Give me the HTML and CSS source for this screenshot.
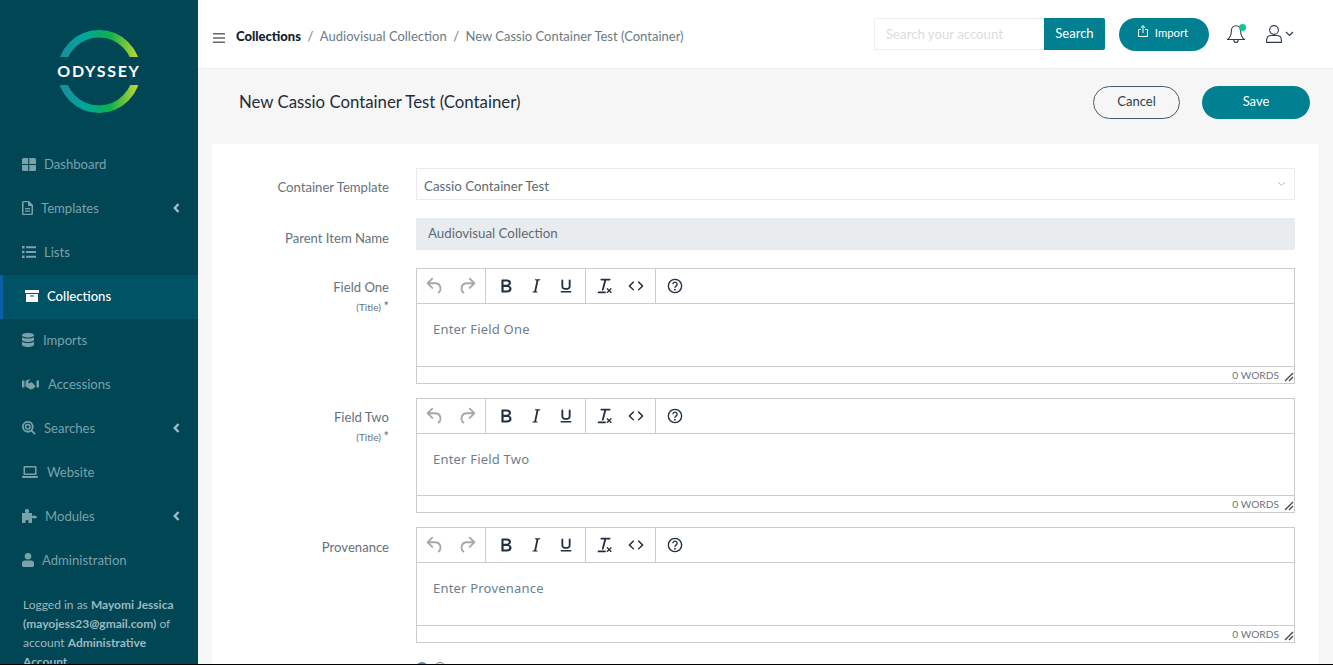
FILE: index.html
```html
<!DOCTYPE html>
<html lang="en">
<head>
    <meta charset="UTF-8">
    <title>New Cassio Container Test (Container)</title>
    <link rel="stylesheet" href="styles.css">
</head>
<body>

    <svg class="defs" width="0" height="0">
        <symbol id="i-undo" viewBox="0 0 24 24"><path d="M6.4 8H12c3.7 0 6.2 2 6.8 5.1.6 2.7-.4 5.6-2.3 6.8a1 1 0 0 1-1-1.8c1.1-.6 1.8-2.7 1.4-4.6-.5-2.1-2.1-3.5-4.9-3.5H6.4l3.3 3.3a1 1 0 1 1-1.4 1.4l-5-5a1 1 0 0 1 0-1.4l5-5a1 1 0 0 1 1.4 1.4L6.4 8z"/></symbol>
        <symbol id="i-redo" viewBox="0 0 24 24"><path d="M17.6 8H12c-3.7 0-6.2 2-6.8 5.1-.6 2.7.4 5.6 2.300 6.8a1 1 0 0 0 1-1.800c-1.100-.6-1.800-2.700-1.400-4.600.5-2.100 2.100-3.500 4.900-3.500h5.600l-3.300 3.300a1 1 0 1 0 1.400 1.400l5-5a1 1 0 0 0 0-1.400l-5-5a1 1 0 0 0-1.400 1.400L17.600 8z"/></symbol>
        <symbol id="i-bold" viewBox="0 0 24 24"><path d="M7.8 19c-.3 0-.5 0-.6-.2l-.2-.5V5.7c0-.2 0-.4.2-.5l.6-.2h5c1.5 0 2.7.3 3.5 1 .7.6 1.1 1.4 1.1 2.5a3 3 0 0 1-.6 1.9c-.4.6-1 1-1.6 1.2.4.1.9.3 1.3.6s.8.7 1 1.2c.4.4.5 1 .5 1.6 0 1.3-.4 2.3-1.3 3-.8.7-2.1 1-3.8 1H7.8zm5-8.3c.6 0 1.2-.1 1.6-.5.4-.3.6-.7.6-1.3 0-1.1-.8-1.7-2.3-1.7H9.3v3.5h3.4zm.5 6c.7 0 1.3-.1 1.7-.4.4-.4.6-.9.6-1.5s-.2-1-.7-1.4c-.4-.3-1-.4-2-.4H9.4v3.8h4z"/></symbol>
        <symbol id="i-italic" viewBox="0 0 24 24"><path d="M16.7 4.7l-.1.9h-.3c-.6 0-1 0-1.4.3-.3.3-.4.6-.5 1.1l-2.1 9.8v.6c0 .5.4.8 1.4.8h.2l-.2.8H8l.2-.8h.2c1.1 0 1.8-.5 2-1.5l2-9.8.1-.5c0-.6-.4-.8-1.4-.8h-.3l.2-.9h5.800z"/></symbol>
        <symbol id="i-underline" viewBox="0 0 24 24"><path d="M16 5c.6 0 1 .4 1 1v6.500c0 2.500-2.200 3.700-5 3.700s-5-1.200-5-3.700V6c0-.6.4-1 1-1s1 .4 1 1v6.500c0 1.200 1.300 1.800 3 1.800s3-.6 3-1.800V6c0-.6.4-1 1-1zM7 17.500h10c.6 0 1 .3 1 .8s-.4.8-1 .8H7c-.6 0-1-.3-1-.8s.4-.8 1-.8z"/></symbol>
        <symbol id="i-clear" viewBox="0 0 24 24"><path d="M13.2 6a1 1 0 0 1 0 .2l-2.6 10a1 1 0 0 1-1 .8h-.2a.8.8 0 0 1-.8-1l2.6-10H8a1 1 0 1 1 0-2h9a1 1 0 0 1 0 2h-3.8zM5 18h7a1 1 0 0 1 0 2H5a1 1 0 0 1 0-2zm13 1.5L16.5 18 15 19.5a.7.7 0 0 1-1-1l1.5-1.5-1.5-1.5a.7.7 0 0 1 1-1l1.5 1.5 1.5-1.5a.7.7 0 0 1 1 1L17.5 17l1.5 1.5a.7.7 0 0 1-1 1z"/></symbol>
        <symbol id="i-code" viewBox="0 0 24 24"><path d="M9.8 15.7c.3.3.3.8 0 1-.3.4-.9.4-1.2 0l-4.4-4.1a.8.8 0 0 1 0-1.2l4.4-4.2c.3-.3.9-.3 1.2 0 .3.3.3.8 0 1.1L6 12l3.8 3.7zM14.2 15.7c-.3.3-.3.8 0 1 .4.4.9.4 1.2 0l4.4-4.1c.3-.3.3-.9 0-1.2l-4.4-4.2a.8.8 0 0 0-1.2 0c-.3.3-.3.8 0 1.1L18 12l-3.8 3.7z"/></symbol>
        <symbol id="i-help" viewBox="0 0 24 24"><path d="M12 4a8 8 0 1 1 0 16 8 8 0 0 1 0-16zm0 1.500a6.500 6.500 0 1 0 0 13 6.500 6.500 0 0 0 0-13zm-.1 9.500a1 1 0 1 1 0 2 1 1 0 0 1 0-2zm.1-8c1.700 0 3 1.300 3 3 0 1.300-.8 2.200-1.600 2.700-.4.2-.7.6-.7 1.100v.2h-1.500v-.3c0-1 .6-1.800 1.400-2.300.5-.3.9-.7.9-1.400 0-.8-.7-1.500-1.500-1.500s-1.500.7-1.500 1.500H9c0-1.700 1.300-3 3-3z"/></symbol>
        <symbol id="i-grip" viewBox="0 0 10 10"><path d="M9 1 1 9M9 5 5 9" fill="none" stroke="currentColor" stroke-width="1.300"/></symbol>
        <symbol id="i-caret" viewBox="0 0 7 10"><path d="M5.500 1 1.800 5l3.700 4" fill="none" stroke="currentColor" stroke-width="2.400"/></symbol>
    </svg>

    <div class="app">

        <aside class="sidebar">
            <div class="logo">
                <svg width="100" height="90" viewBox="0 0 100 90">
                    <defs>
                        <linearGradient id="ring" x1="0" y1="0" x2="1" y2="0">
                            <stop offset="0" stop-color="#1c8c9c"/>
                            <stop offset="0.3" stop-color="#00a79d"/>
                            <stop offset="0.65" stop-color="#0db14b"/>
                            <stop offset="1" stop-color="#bcd631"/>
                        </linearGradient>
                        <clipPath id="ring-cut">
                            <rect x="0" y="0" width="100" height="28"/>
                            <rect x="0" y="56" width="100" height="34"/>
                        </clipPath>
                    </defs>
                    <circle cx="50" cy="42.500" r="37.700" fill="none" stroke="url(#ring)" stroke-width="7.600" clip-path="url(#ring-cut)"/>
                </svg>
                <span class="logo-text">ODYSSEY</span>
            </div>

            <nav class="nav">
                <a class="nav-item">
                    <svg class="nav-icon" width="14" height="13" viewBox="0 0 14 13"><path d="M0 1.500A1.500 1.500 0 0 1 1.500 0h4.700v6H0zM7.300 0h5.200A1.500 1.500 0 0 1 14 1.500V6H7.300zM0 7.100h6.200V13H1.500A1.500 1.500 0 0 1 0 11.500zM7.300 7.100H14v4.400a1.500 1.500 0 0 1-1.500 1.500H7.300z"/></svg>
                    <span class="nav-label nav-label-8">Dashboard</span>
                </a>
                <a class="nav-item">
                    <svg class="nav-icon" width="11" height="14" viewBox="0 0 11 14"><path fill-rule="evenodd" d="M1.500 0H7l4 4v8.500a1.500 1.500 0 0 1-1.500 1.500h-8A1.500 1.500 0 0 1 0 12.500v-11A1.500 1.500 0 0 1 1.500 0zm0 1.300v11.400h8V5H6V1.300zM3 7h5v1.200H3zm0 2.500h5v1.200H3z"/></svg>
                    <span class="nav-label nav-label-8">Templates</span>
                    <svg class="nav-caret" width="7" height="10"><use href="#i-caret"/></svg>
                </a>
                <a class="nav-item">
                    <svg class="nav-icon" width="14" height="12" viewBox="0 0 14 12"><path d="M0 0h2.500v2.500H0zM4 .3h10v2H4zM0 4.700h2.500v2.500H0zM4 5h10v2H4zM0 9.400h2.500v2.500H0zM4 9.700h10v2H4z"/></svg>
                    <span class="nav-label nav-label-8">Lists</span>
                </a>
                <a class="nav-item nav-item-active">
                    <svg class="nav-icon" width="14" height="12" viewBox="0 0 14 12"><path fill-rule="evenodd" d="M0 0h14v3H0zM1 4h12v8H1zm4 1.500v1h4v-1z"/></svg>
                    <span class="nav-label nav-label-8">Collections</span>
                </a>
                <a class="nav-item">
                    <svg class="nav-icon" width="12" height="14" viewBox="0 0 12 14"><path d="M6 0c3.300 0 6 .9 6 2.200S9.300 4.400 6 4.400 0 3.500 0 2.200 2.700 0 6 0zM0 4c1 1 3.500 1.500 6 1.500S11 5 12 4v2.800c0 1.200-2.700 2.200-6 2.200S0 8 0 6.800zM0 8.600c1 1 3.500 1.500 6 1.500s5-.5 6-1.500v3.200C12 13 9.300 14 6 14s-6-1-6-2.200z"/></svg>
                    <span class="nav-label nav-label-9">Imports</span>
                </a>
                <a class="nav-item">
                    <svg class="nav-icon" width="17" height="11" viewBox="0 0 17 11"><path d="M0 1.500h2.500v7H0zM14.500 1.500H17v7h-2.500zM3.500 2 6.500.5h2L6 3l1 1.500L9.500 3l4 4-1 1.500-1 1-1 .5-2 .5L4.500 8l-1-.5z"/></svg>
                    <span class="nav-label nav-label-9">Accessions</span>
                </a>
                <a class="nav-item">
                    <svg class="nav-icon" width="14" height="14" viewBox="0 0 14 14"><path fill-rule="evenodd" d="M5.800 0a5.800 5.800 0 0 1 4.700 9.200l3.200 3.200-1.300 1.300-3.200-3.200A5.800 5.800 0 1 1 5.800 0zm0 1.800a4 4 0 1 0 0 8 4 4 0 0 0 0-8zm0 1a3 3 0 1 1 0 6 3 3 0 0 1 0-6zm0 1.500a1.500 1.500 0 1 0 0 3 1.500 1.500 0 0 0 0-3z"/></svg>
                    <span class="nav-label nav-label-8">Searches</span>
                    <svg class="nav-caret" width="7" height="10"><use href="#i-caret"/></svg>
                </a>
                <a class="nav-item">
                    <svg class="nav-icon" width="16" height="12" viewBox="0 0 16 12"><path fill-rule="evenodd" d="M2.500 0h11A1 1 0 0 1 14.500 1v8h-13V1a1 1 0 0 1 1-1zM3 1.400v6.200h10V1.400zM0 10h16v.8a1.200 1.200 0 0 1-1.200 1.200H1.200A1.200 1.200 0 0 1 0 10.800z"/></svg>
                    <span class="nav-label nav-label-9">Website</span>
                </a>
                <a class="nav-item">
                    <svg class="nav-icon" width="15" height="14" viewBox="0 0 15 14"><path d="M0 4h3.500C3 3 2.800 2.500 3 1.500 3.300.500 4 0 5 0s1.800.5 2 1.500c.2 1-.2 1.500-.6 2.500H10v3c1-.5 1.500-.7 2.500-.5 1 .2 2.500 1 2.500 1.500s-1.500 1.500-2.500 1.500-1.500-.2-2.500-.7V14H6.500v-1.500C6.500 11.500 6 11 5 11s-1.500.5-1.500 1.500V14H0z"/></svg>
                    <span class="nav-label nav-label-8">Modules</span>
                    <svg class="nav-caret" width="7" height="10"><use href="#i-caret"/></svg>
                </a>
                <a class="nav-item">
                    <svg class="nav-icon" width="12" height="14" viewBox="0 0 12 14"><path d="M6 0a3.300 3.300 0 1 1 0 6.600A3.300 3.300 0 0 1 6 0zM3 7.600h6a3 3 0 0 1 3 3v2A1.400 1.400 0 0 1 10.600 14H1.400A1.400 1.400 0 0 1 0 12.600v-2a3 3 0 0 1 3-3z"/></svg>
                    <span class="nav-label nav-label-8">Administration</span>
                </a>
            </nav>

            <p class="logged-in">Logged in as <b>Mayomi Jessica (mayojess23@gmail.com)</b> of account <b>Administrative Account</b></p>
        </aside>

        <div class="main">
            <header class="topbar">
                <svg class="menu-icon" width="12" height="10" viewBox="0 0 12 10"><path d="M0 0h12v1.600H0zM0 4.200h12v1.600H0zM0 8.400h12V10H0z"/></svg>
                <div class="breadcrumb">
                    <b>Collections</b>
                    <span class="crumb-sep">/</span>
                    <span>Audiovisual Collection</span>
                    <span class="crumb-sep">/</span>
                    <span>New Cassio Container Test (Container)</span>
                </div>
                <div class="topbar-right">
                    <div class="search">
                        <div class="search-input">Search your account</div>
                        <button class="search-btn">Search</button>
                    </div>
                    <button class="import-btn">
                        <svg class="import-icon" width="10" height="12" viewBox="0 0 10 12"><path d="M5 8V.8M2.800 2.800 5 .7l2.200 2.100M2.800 4.500H.5v7h9v-7H7.200" fill="none" stroke="#fff" stroke-width="1"/></svg>
                        Import
                    </button>
                    <div class="bell">
                        <svg width="18" height="18" viewBox="0 0 18 18"><path d="M9 .8C6 .8 4.300 3 4.300 6.300c0 4-1.300 6.300-3.700 8.200h16.800c-2.400-1.900-3.700-4.200-3.700-8.200C13.700 3 12 .8 9 .8zM6.800 14.500c0 2 1 3 2.200 3s2.200-1 2.200-3" fill="none" stroke="#2c3e50" stroke-width="1.100"/></svg>
                        <span class="bell-dot"></span>
                    </div>
                    <div class="user">
                        <svg width="16" height="18" viewBox="0 0 16 18"><circle cx="8" cy="5" r="4.400" fill="none" stroke="#2c3e50" stroke-width="1.100"/><path d="M.6 17.400v-2c0-3 1.900-4.900 4.700-4.900h5.400c2.800 0 4.700 1.900 4.700 4.900v2z" fill="none" stroke="#2c3e50" stroke-width="1.100"/></svg>
                        <svg width="9" height="6" viewBox="0 0 9 6"><path d="M1 1l3.500 3.500L8 1" fill="none" stroke="#2c3e50" stroke-width="1.200"/></svg>
                    </div>
                </div>
            </header>

            <div class="page-head">
                <h1 class="page-title">New Cassio Container Test (Container)</h1>
                <div class="page-actions">
                    <button class="btn btn-cancel">Cancel</button>
                    <button class="btn btn-save">Save</button>
                </div>
            </div>

            <div class="card">
                <div class="form-row form-row-field">
                    <label class="form-label">Container Template</label>
                    <div class="select">
                        <span>Cassio Container Test</span>
                        <svg width="9" height="6" viewBox="0 0 9 6"><path d="M1 1l3.500 3.500L8 1" fill="none" stroke="#b8bcc0" stroke-width="1"/></svg>
                    </div>
                </div>
                <div class="form-row form-row-field">
                    <label class="form-label form-label-low">Parent Item Name</label>
                    <div class="readonly">Audiovisual Collection</div>
                </div>

                <div class="form-row form-row-editor">
                    <label class="form-label form-label-editor">Field One<small><i>(Title)</i> <em>*</em></small></label>
                    <div class="editor">
                        <div class="toolbar">
                            <div class="tool-group tool-group-history">
                                <svg class="tool tool-off"><use href="#i-undo"/></svg>
                                <svg class="tool tool-off"><use href="#i-redo"/></svg>
                            </div>
                            <div class="tool-group tool-group-format">
                                <svg class="tool"><use href="#i-bold"/></svg>
                                <svg class="tool"><use href="#i-italic"/></svg>
                                <svg class="tool"><use href="#i-underline"/></svg>
                            </div>
                            <div class="tool-group tool-group-source">
                                <svg class="tool"><use href="#i-clear"/></svg>
                                <svg class="tool"><use href="#i-code"/></svg>
                            </div>
                            <div class="tool-group tool-group-help">
                                <svg class="tool"><use href="#i-help"/></svg>
                            </div>
                        </div>
                        <div class="editor-body">Enter Field One</div>
                        <div class="statusbar">0 WORDS<svg class="grip"><use href="#i-grip"/></svg></div>
                    </div>
                </div>

                <div class="form-row form-row-editor">
                    <label class="form-label form-label-editor">Field Two<small><i>(Title)</i> <em>*</em></small></label>
                    <div class="editor">
                        <div class="toolbar">
                            <div class="tool-group tool-group-history">
                                <svg class="tool tool-off"><use href="#i-undo"/></svg>
                                <svg class="tool tool-off"><use href="#i-redo"/></svg>
                            </div>
                            <div class="tool-group tool-group-format">
                                <svg class="tool"><use href="#i-bold"/></svg>
                                <svg class="tool"><use href="#i-italic"/></svg>
                                <svg class="tool"><use href="#i-underline"/></svg>
                            </div>
                            <div class="tool-group tool-group-source">
                                <svg class="tool"><use href="#i-clear"/></svg>
                                <svg class="tool"><use href="#i-code"/></svg>
                            </div>
                            <div class="tool-group tool-group-help">
                                <svg class="tool"><use href="#i-help"/></svg>
                            </div>
                        </div>
                        <div class="editor-body">Enter Field Two</div>
                        <div class="statusbar">0 WORDS<svg class="grip"><use href="#i-grip"/></svg></div>
                    </div>
                </div>

                <div class="form-row form-row-editor">
                    <label class="form-label form-label-editor form-label-single">Provenance</label>
                    <div class="editor">
                        <div class="toolbar">
                            <div class="tool-group tool-group-history">
                                <svg class="tool tool-off"><use href="#i-undo"/></svg>
                                <svg class="tool tool-off"><use href="#i-redo"/></svg>
                            </div>
                            <div class="tool-group tool-group-format">
                                <svg class="tool"><use href="#i-bold"/></svg>
                                <svg class="tool"><use href="#i-italic"/></svg>
                                <svg class="tool"><use href="#i-underline"/></svg>
                            </div>
                            <div class="tool-group tool-group-source">
                                <svg class="tool"><use href="#i-clear"/></svg>
                                <svg class="tool"><use href="#i-code"/></svg>
                            </div>
                            <div class="tool-group tool-group-help">
                                <svg class="tool"><use href="#i-help"/></svg>
                            </div>
                        </div>
                        <div class="editor-body">Enter Provenance</div>
                        <div class="statusbar">0 WORDS<svg class="grip"><use href="#i-grip"/></svg></div>
                    </div>
                </div>

                <div class="form-row">
                    <div class="radios">
                        <span class="radio radio-on"></span>
                        <span class="radio"></span>
                    </div>
                </div>
            </div>
        </div>

    </div>

</body>
</html>
```

FILE: styles.css
```css
* {
    box-sizing: border-box;
}

html, body {
    margin: 0;
    height: 665px;
    overflow: hidden;
}

body {
    font-family: "Lato", "Open Sans", sans-serif;
    background-color: #000;
    color: #5d6a75;
}

.defs {
    display: none;
}

.app {
    display: flex;
    height: 664px;
    overflow: hidden;
    background-color: #f6f6f6;
}

/* sidebar */

.sidebar {
    width: 198px;
    flex-shrink: 0;
    background-color: #004655;
    overflow: hidden;
}

.logo {
    position: relative;
    height: 143px;
    padding: 29px 0 0 49px;
}

.logo svg {
    display: block;
}

.logo-text {
    position: absolute;
    left: 0;
    width: 198px;
    top: 61px;
    text-align: center;
    font-size: 16px;
    line-height: 20px;
    font-weight: 700;
    letter-spacing: 1.700px;
    color: #fff;
}

.nav-item {
    display: flex;
    align-items: center;
    height: 44px;
    padding: 0 18px 2px 22px;
    font-size: 13.100px;
    color: #7ba1ab;
}

.nav-icon {
    fill: #7ba1ab;
    flex-shrink: 0;
}

.nav-label-8 {
    margin-left: 8px;
}

.nav-label-9 {
    margin-left: 9px;
}

.nav-caret {
    margin-left: auto;
    color: #9fbcc4;
}

.nav-item-active {
    background-color: #005265;
    border-left: 3px solid #0b5fa5;
    padding-left: 22px;
    color: #fff;
    font-weight: 500;
}

.nav-item-active .nav-icon {
    fill: #fff;
}

.logged-in {
    margin: 12px 0 0;
    padding: 0 22px 0 23px;
    font-size: 12px;
    line-height: 19px;
    color: #9db8bf;
}

.logged-in b {
    font-weight: 700;
}

/* top bar */

.main {
    flex: 1;
    min-width: 0;
}

.topbar {
    display: flex;
    align-items: center;
    height: 69px;
    padding: 0 39px 0 15px;
    background-color: #fff;
    border-bottom: 1px solid #ebebeb;
}

.menu-icon {
    fill: #666;
    margin-top: 7px;
}

.breadcrumb {
    display: flex;
    margin: 3px 0 0 11px;
    gap: 5.500px;
    font-size: 13px;
    color: #6c7a85;
}

.breadcrumb b {
    color: #14202b;
    font-weight: 900;
}

.crumb-sep {
    margin: 0 1px;
}

.topbar-right {
    display: flex;
    align-items: center;
    margin-left: auto;
}

.search {
    display: flex;
    height: 32px;
}

.search-input {
    width: 170px;
    padding: 7px 11px;
    border: 1px solid #ededed;
    border-right: none;
    font-size: 13.200px;
    color: #dcdcdc;
}

.search-btn {
    width: 61px;
    border: none;
    border-radius: 0 2px 2px 0;
    background-color: #008091;
    color: #fff;
    font-family: inherit;
    font-size: 13px;
    padding-bottom: 3px;
}

.import-btn {
    display: flex;
    align-items: center;
    justify-content: center;
    gap: 7px;
    width: 90px;
    height: 33px;
    margin-left: 14px;
    padding: 0 2px 3px 0;
    border: none;
    border-radius: 17px;
    background-color: #008091;
    color: #fff;
    font-family: inherit;
    font-size: 11.300px;
}

.import-icon {
    margin-bottom: 3px;
}

.bell {
    position: relative;
    width: 18px;
    height: 18px;
    margin-left: 18px;
}

.bell svg {
    display: block;
}

.bell-dot {
    position: absolute;
    top: -1px;
    right: -1px;
    width: 7px;
    height: 7px;
    border-radius: 50%;
    background-color: #0fc39b;
}

.user {
    display: flex;
    align-items: center;
    gap: 3px;
    margin-left: 21px;
}

/* page header */

.page-head {
    display: flex;
    align-items: center;
    justify-content: space-between;
    height: 75px;
    padding: 0 23px 8px 41px;
}

.page-title {
    margin: 0 0 2px;
    font-size: 16.800px;
    font-weight: 400;
    color: #1f2d3a;
}

.page-actions {
    display: flex;
    gap: 22px;
}

.btn {
    height: 33px;
    border-radius: 17px;
    font-family: inherit;
    font-size: 13px;
    padding-bottom: 5px;
}

.btn-cancel {
    width: 87px;
    background: transparent;
    border: 1px solid #4a5a68;
    color: #2c3e50;
}

.btn-save {
    width: 108px;
    background-color: #008091;
    border: none;
    color: #fff;
}

/* form */

.card {
    margin: 0 14px 0 14px;
    padding: 24px 24px 0 0;
    background-color: #fff;
}

.form-row {
    display: flex;
}

.form-row-field {
    margin-bottom: 18px;
}

.form-row-editor {
    margin-bottom: 14px;
}

.form-label {
    width: 177px;
    margin-right: 27px;
    flex-shrink: 0;
    text-align: right;
    font-size: 13.100px;
    line-height: 18px;
    color: #66727c;
}

.form-row-field .form-label {
    padding-top: 10px;
}

.form-row-field .form-label-low {
    padding-top: 11px;
}

.form-row-editor .form-label-editor {
    padding-top: 10px;
}

.form-row-editor .form-label-single {
    padding-top: 11px;
}

.form-label small {
    display: block;
    font-size: 10px;
    line-height: 20px;
}

.form-label small i {
    font-style: normal;
}

.form-label small em {
    font-style: normal;
    font-size: 13px;
}

.select {
    display: flex;
    align-items: center;
    justify-content: space-between;
    flex: 1;
    height: 32px;
    padding: 0 8px 0 7px;
    border: 1px solid #eaeaea;
    font-size: 13.300px;
}

.select span {
    padding-top: 3px;
}

.readonly {
    flex: 1;
    height: 32px;
    padding: 7px 12px;
    background-color: #e9ecef;
    font-size: 13.300px;
}

.editor {
    display: flex;
    flex-direction: column;
    flex: 1;
    height: 115.500px;
    border: 1px solid #cccccc;
}

.toolbar {
    display: flex;
    height: 35px;
    flex-shrink: 0;
    border-bottom: 1px solid #cccccc;
}

.tool-group {
    display: flex;
    align-items: center;
    border-right: 1px solid #cccccc;
}

.tool-group-history {
    width: 69px;
    gap: 10px;
    padding-left: 7px;
}

.tool-group-format {
    width: 100px;
    gap: 8px;
    padding-left: 9px;
}

.tool-group-source {
    width: 70px;
    gap: 9px;
    padding-left: 8px;
}

.tool-group-help {
    border-right: none;
    padding-left: 8px;
}

.tool {
    width: 22px;
    height: 22px;
    fill: #222f3e;
}

.tool-off {
    fill: #a2a8ae;
}

.editor-body {
    flex: 1;
    padding: 16px 16px 0;
    font-family: "Noto Sans", sans-serif;
    font-size: 13px;
    letter-spacing: 0.200px;
    color: #6b7f90;
}

.statusbar {
    display: flex;
    align-items: center;
    justify-content: flex-end;
    height: 17px;
    flex-shrink: 0;
    border-top: 1px solid #cccccc;
    font-size: 10.200px;
    color: #6a7680;
}

.grip {
    width: 10px;
    height: 10px;
    margin: 4px 0 0 5px;
    color: #444;
}

.radios {
    display: flex;
    gap: 6px;
    margin: 5px 0 0 204px;
}

.radio {
    width: 12px;
    height: 12px;
    border: 1px solid #777;
    border-radius: 50%;
}

.radio-on {
    border: 2px solid #3b8ee0;
}
```
